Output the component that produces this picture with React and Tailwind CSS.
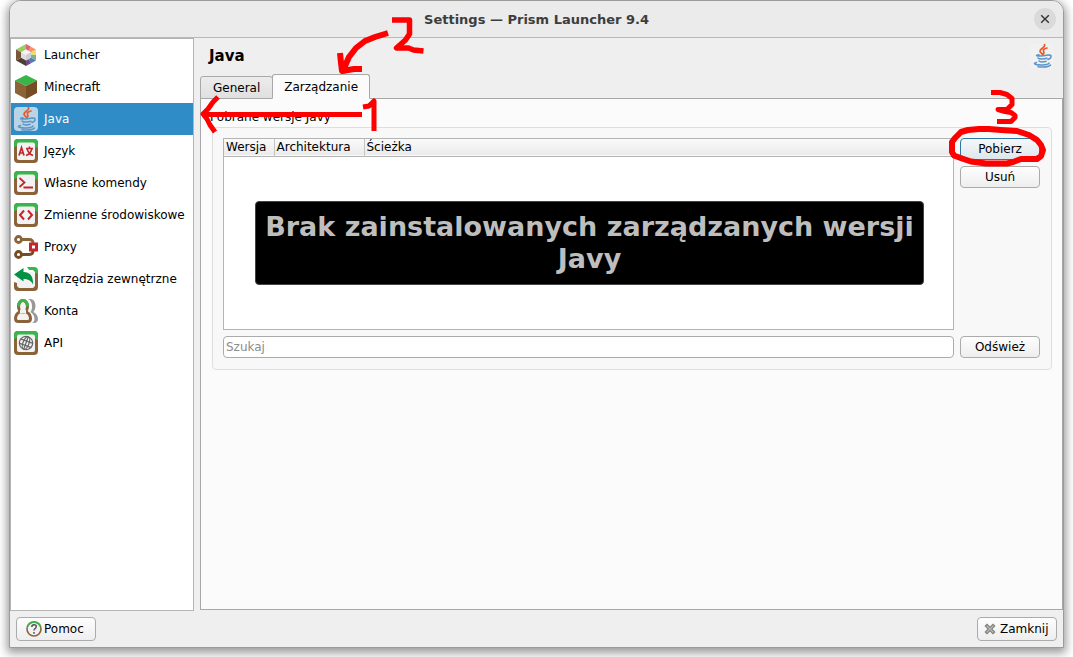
import React, { useState } from "react";

const PAGES = [
  { id: "launcher", label: "Launcher", Icon: LauncherIcon },
  { id: "minecraft", label: "Minecraft", Icon: MinecraftIcon },
  { id: "java", label: "Java", Icon: JavaIcon },
  { id: "language", label: "Język", Icon: LanguageIcon },
  { id: "commands", label: "Własne komendy", Icon: CommandsIcon },
  { id: "env", label: "Zmienne środowiskowe", Icon: EnvIcon },
  { id: "proxy", label: "Proxy", Icon: ProxyIcon },
  { id: "tools", label: "Narzędzia zewnętrzne", Icon: ToolsIcon },
  { id: "accounts", label: "Konta", Icon: AccountsIcon },
  { id: "api", label: "API", Icon: ApiIcon },
];

export default function App() {
  const [page, setPage] = useState("java");
  const [tab, setTab] = useState("manage");
  const [search, setSearch] = useState("");

  return (
    <div className="relative h-screen min-h-[480px] overflow-hidden bg-white px-[9px] pb-[9px] font-['DejaVu_Sans',sans-serif] text-[12px] leading-4 text-black">
      <div className="flex h-full flex-col overflow-hidden rounded-t-xl border border-[#9b9b9b] bg-[#efefef] shadow-[0_3px_10px_2px_rgba(0,0,0,0.4)]">
        {/* TITLE BAR */}
        <header className="flex h-[37px] shrink-0 items-center border-b border-[#b8b8b8] bg-[#ebebeb] px-[7px]">
          <span className="w-[22px]" />
          <h1 className="flex-1 pt-[2px] text-center text-[13px] font-bold text-[#3d3d3d]">
            Settings — Prism Launcher 9.4
          </h1>
          <button
            aria-label="Close"
            className="flex size-[22px] items-center justify-center rounded-full bg-[#dadada]"
          >
            <svg viewBox="0 0 10 10" className="size-[10px]">
              <path d="M1.2 1.2l7.6 7.6M8.8 1.2l-7.6 7.6" stroke="#333" strokeWidth="1.4" />
            </svg>
          </button>
        </header>

        <div className="flex min-h-0 flex-1">
          {/* SIDEBAR */}
          <nav className="w-[184px] shrink-0 border border-[#b4b4b4] bg-white">
            {PAGES.map(({ id, label, Icon }) => (
              <button
                key={id}
                onClick={() => setPage(id)}
                aria-current={page === id ? "page" : undefined}
                className={`flex h-8 w-full items-center gap-[6px] whitespace-nowrap pl-[3px] text-left ${
                  page === id ? "bg-[#308cc6] text-white" : ""
                }`}
              >
                <Icon />
                {label}
              </button>
            ))}
          </nav>

          <main className="ml-[6px] flex min-w-0 flex-1 flex-col">
            <div className="flex h-9 shrink-0 items-center justify-between px-[9px]">
              <h2 className="text-[15px] font-bold">Java</h2>
              <JavaIcon />
            </div>

            {/* TABS */}
            <div role="tablist" className="relative z-10 -mb-px flex h-[25px] shrink-0 items-end">
              <Tab active={tab === "general"} onClick={() => setTab("general")}>
                General
              </Tab>
              <Tab active={tab === "manage"} onClick={() => setTab("manage")}>
                Zarządzanie
              </Tab>
            </div>

            <div
              role="tabpanel"
              className="mb-px min-h-0 flex-1 border border-[#a8a8a8] bg-[#fbfbfb] pl-[11px] pr-[10px] pt-[10px]"
            >
              <h3 id="versions-title" className="-ml-[2px] mb-[2px]">
                Pobrane wersje Javy
              </h3>
              <div
                role="group"
                aria-labelledby="versions-title"
                className="flex flex-col gap-[6px] rounded-sm border border-[#dedede] bg-[#f8f8f8] pb-[11px] pl-[10px] pr-[11px] pt-[10px]"
              >
                <div className="flex gap-[6px]">
                  <VersionList />
                  <div className="flex w-20 shrink-0 flex-col gap-[6px]">
                    <Button focused>Pobierz</Button>
                    <Button>Usuń</Button>
                  </div>
                </div>
                <div className="flex gap-[6px]">
                  <input
                    type="text"
                    aria-label="Szukaj"
                    placeholder="Szukaj"
                    value={search}
                    onChange={(e) => setSearch(e.target.value)}
                    className="h-[22px] min-w-0 flex-1 rounded-sm border border-[#ababab] bg-white px-[2px] outline-none placeholder:text-[#8c8c8c]"
                  />
                  <div className="flex w-20 shrink-0 flex-col">
                    <Button>Odśwież</Button>
                  </div>
                </div>
              </div>
            </div>
          </main>
        </div>

        {/* FOOTER */}
        <footer className="flex h-9 shrink-0 items-center justify-between px-[6px]">
          <button className="flex h-6 w-20 items-center gap-[2px] rounded-sm border border-[#ababab] bg-linear-to-b from-[#fdfdfd] to-[#eeeeee] pl-[9px]">
            <HelpIcon />
            Pomoc
          </button>
          <button className="flex h-6 w-20 items-center gap-1 rounded-sm border border-[#ababab] bg-linear-to-b from-[#fdfdfd] to-[#eeeeee] pl-[6px]">
            <CloseIcon />
            Zamknij
          </button>
        </footer>
      </div>

      <StepMarks />
    </div>
  );
}

/* ---------------- CONTROLS ---------------- */

function Tab({ active, onClick, children }) {
  return (
    <button
      role="tab"
      aria-selected={active}
      onClick={onClick}
      className={`rounded-t-[3px] border border-[#a8a8a8] ${
        active
          ? "-ml-px h-[25px] border-b-[#fbfbfb] bg-[#fbfbfb] px-[11px]"
          : "h-[23px] bg-linear-to-b from-[#ececec] to-[#e0e0e0] px-3"
      }`}
    >
      {children}
    </button>
  );
}

function Button({ focused, children }) {
  return (
    <button
      className={`h-[22px] rounded-sm border bg-linear-to-b ${
        focused
          ? "border-[#2f77a3] from-[#f6f8fa] to-[#dde6ec]"
          : "border-[#ababab] from-[#fdfdfd] to-[#eeeeee]"
      }`}
    >
      {children}
    </button>
  );
}

function VersionList() {
  return (
    <div className="flex h-48 min-w-0 flex-1 flex-col border border-[#b4b4b4] bg-white">
      <table className="w-full table-fixed border-collapse text-left">
        <thead>
          <tr className="h-[17px] border-b border-[#b4b4b4] bg-linear-to-b from-[#fafafa] to-[#ebebeb]">
            <th className="w-[50px] border-r border-[#c4c4c4] p-0 pl-[2px] font-normal">
              Wersja
            </th>
            <th className="w-[90px] border-r border-[#c4c4c4] p-0 pl-[2px] font-normal">
              Architektura
            </th>
            <th className="p-0 pl-[2px] font-normal">Ścieżka</th>
          </tr>
        </thead>
      </table>
      <div className="flex flex-1 items-center pl-[31px] pr-[29px]">
        <p className="w-full rounded-[4px] border border-[#444] bg-black px-2 py-[9px] text-center text-[27px] font-bold leading-8 text-[#bebebe]">
          Brak zainstalowanych zarządzanych wersji Javy
        </p>
      </div>
    </div>
  );
}

/* ---------------- HAND-DRAWN STEPS ---------------- */

function StepMarks() {
  return (
    <>
      <svg
        viewBox="195 10 235 125"
        className="pointer-events-none absolute left-[195px] top-[10px] z-20 h-[125px] w-[235px]"
        fill="none"
        stroke="#ff0000"
        strokeWidth="5"
        strokeLinejoin="round"
      >
        <path d="M362 114.500H203M218 97l-5 5-5 7-5 5 4 5 3 6 5 7" />
        <path d="M363 107l6-1 5-5v30" />
        <path
          d="M388 33l-13 4-10 4-9 7-7 9-4 9-2 7M340 53l1 10 1 8 6-1 6-1h8"
          strokeWidth="6"
        />
        <path d="M392 20h17.500v14l-4 6-9 8h12l5 2 10 1" strokeWidth="5.5" />
      </svg>
      <svg
        viewBox="943 85 110 85"
        className="pointer-events-none absolute right-5 top-[85px] z-20 h-[85px] w-[110px]"
        fill="none"
        stroke="#ff0000"
        strokeWidth="5"
        strokeLinejoin="round"
      >
        <path d="M991 92.500h9l7 2 5 4v6l-5 5h-9l7 2 6 1 4 3v2l-4 4h-14" />
        <path
          d="M952 152v-10l3-4 6-6 7-2 11-1h10l12 1 16 1 12 4 8 5 4 5 2 5-2 6-4 3h-16l-8 3-6 1.500h-21l-15-2-9-3-8-3z"
          strokeWidth="6"
        />
      </svg>
    </>
  );
}

/* ---------------- ICONS ---------------- */

function Svg({ children }) {
  return (
    <svg viewBox="0 0 24 24" className="size-6 shrink-0" fill="none" aria-hidden="true">
      {children}
    </svg>
  );
}

// grass block frame shared by several pages
function BlockFrame({ children }) {
  return (
    <Svg>
      <rect width="24" height="24" rx="4" fill="#8c6239" />
      <path d="M0 8V4a4 4 0 0 1 4-4h16a4 4 0 0 1 4 4v5l-3-1V5H3v2z" fill="#39b54a" />
      <rect x="3" y="3.5" width="18" height="17.5" rx="2" fill="#f2f2f2" />
      {children}
    </Svg>
  );
}

function LauncherIcon() {
  return (
    <Svg>
      <path d="M12 12V1L2 6.5z" fill="#99cd61" />
      <path d="M12 12V1l5 2.8z" fill="#df6277" />
      <path d="M12 12l5-8.2 5 2.7z" fill="#fb9168" />
      <path d="M12 12l10-5.5V12z" fill="#f3db6c" />
      <path d="M12 12h10v5.5z" fill="#7ab392" />
      <path d="M12 12l10 5.5-5 2.7z" fill="#4b7cbc" />
      <path d="M12 12l5 8.2-5 2.8z" fill="#6f488c" />
      <path d="M12 12v11L2 17.5z" fill="#4d3f33" />
      <path d="M12 12L2 17.5v-11z" fill="#7a573b" />
      <path d="M12 6.5l5 2.7v5.6l-5 2.7-5-2.7V9.2z" fill="#dfdfdf" />
      <path d="M12 6.5l5 2.7-5 2.8-5-2.8z" fill="#f4f4f4" />
      <path d="M12 12l5-2.8v5.6l-5 2.7z" fill="#cfcfcf" />
    </Svg>
  );
}

function MinecraftIcon() {
  return (
    <Svg>
      <path d="M12 0l11 5.5L12 11 1 5.5z" fill="#39b54a" />
      <path d="M1 5.5L12 11v13L1 18z" fill="#8c6239" />
      <path d="M23 5.5L12 11v13l11-6z" fill="#754c24" />
    </Svg>
  );
}

function JavaIcon() {
  return (
    <Svg>
      <rect width="24" height="24" rx="4" fill="#f2f2f2" fillOpacity="0.7" />
      <path
        d="M14.5 0.5c1.5 3-4.5 4-4.5 6.500 0 1.700 1.500 2 2.500 3.500M17 4c-3 .8-4 1.800-3.500 3.200.5 1 .8 2-.5 3.300"
        stroke="#ec5a29"
        strokeWidth="1.7"
        strokeLinecap="round"
      />
      <g stroke="#5b94c9" strokeWidth="1.5" strokeLinecap="round">
        <path d="M9 10.8c-7 1.200 2 2 9 .2" />
        <path d="M8 14c1 1.300 6 1.200 9 .2M9 17c1 1.200 4.500 1.200 7 .2" />
        <path d="M18.500 11.200c3.500-1 3.500 3-.5 4.300" />
        <path d="M6.500 18.500c-6 1.500 2 3 8.500 2.200 2-.2 4-.7 4-1.700M8 22.700c5 .6 11 0 12.500-1.700" />
      </g>
    </Svg>
  );
}

function LanguageIcon() {
  return (
    <BlockFrame>
      <path d="M5 16.5L7.500 8.500 10 16.500M6 14h3.500" stroke="#c1272d" strokeWidth="1.7" />
      <path d="M12 9.500h7M15.500 7.500v2M18 9.500c-1 4-3 6-6 7M13 9.500c1 4 3 6 6 7" stroke="#c1272d" strokeWidth="1.6" />
    </BlockFrame>
  );
}

function CommandsIcon() {
  return (
    <BlockFrame>
      <path d="M5.500 7l5 4.500-5 4.500M9.500 16.500H19" stroke="#c1272d" strokeWidth="1.8" />
    </BlockFrame>
  );
}

function EnvIcon() {
  return (
    <BlockFrame>
      <path d="M10 7.500L6 12l4 4.500M14 7.500l4 4.500-4 4.500" stroke="#c1272d" strokeWidth="2" />
    </BlockFrame>
  );
}

function ProxyIcon() {
  return (
    <Svg>
      <path d="M8 4.500h7c3 0 4 1 4 4" stroke="#8c6239" strokeWidth="3" />
      <path d="M8 19.500h7c3 0 4-1 4-4" stroke="#754c24" strokeWidth="3" />
      <circle cx="4.5" cy="4.5" r="3" stroke="#8c6239" strokeWidth="2.8" />
      <circle cx="4.5" cy="19.5" r="3" stroke="#754c24" strokeWidth="2.8" />
      <rect x="16.5" y="9" width="6" height="6" fill="#fff" stroke="#c1272d" strokeWidth="3" />
    </Svg>
  );
}

function ToolsIcon() {
  return (
    <Svg>
      <path d="M3 5h16l2 2v14H3z" fill="#f2f2f2" />
      <path d="M13 0h7a4 4 0 0 1 4 4v4l-3-1V5l-2-2h-4z" fill="#39b54a" />
      <path d="M24 7v13a4 4 0 0 1-4 4H4a4 4 0 0 1-4-4v-5l3 1v3l2 2h14l2-2V6z" fill="#8c6239" />
      <path d="M0 7.500L9.500 1v4c7 0 10 5 9.500 12.500-2-4-5-5.500-9.500-5.500v2.500z" fill="#009245" />
    </Svg>
  );
}

function AccountsIcon() {
  return (
    <Svg>
      <path
        d="M14 0h2.500c3 0 5 3 5 7 0 2.500-1 4.500-2 6 2.500 1.500 4.500 3.500 4.500 7 0 2.500-1.500 4-4 4h-2c2-1 2.500-2.500 2.500-4 0-3.500-2-5.500-4-7 1-1.500 1.500-3.500 1.500-6 0-3-1.500-6-4-7z"
        fill="#999"
      />
      <path
        d="M5.500 13C3 14.500 1.500 16.500 1.500 19.500c0 2 1 3 3 3h9c2 0 3-1 3-3 0-3-1.500-5-4-6.500"
        fill="#f2f2f2"
        stroke="#8c6239"
        strokeWidth="3"
      />
      <ellipse cx="9" cy="7.5" rx="4.500" ry="6" fill="#f2f2f2" stroke="#8c6239" strokeWidth="3" />
      <path d="M4.500 7.500C4.500 4 6.500 1.500 9 1.500s4.500 2.500 4.500 6" stroke="#39b54a" strokeWidth="3" />
      <path d="M6 10.500h6v4H6z" fill="#f2f2f2" />
    </Svg>
  );
}

function ApiIcon() {
  return (
    <BlockFrame>
      <g stroke="#666" strokeWidth="1.2" transform="rotate(20 12 12)">
        <circle cx="12" cy="12" r="6.7" />
        <ellipse cx="12" cy="12" rx="3" ry="6.7" />
        <path d="M5.500 10h13M5.500 14.500h13M12 5.300v13.400" />
      </g>
    </BlockFrame>
  );
}

function HelpIcon() {
  return (
    <svg viewBox="0 0 16 16" className="size-4 shrink-0" fill="none" aria-hidden="true">
      <circle cx="8" cy="8" r="7" fill="#f2f2f2" stroke="#8c6239" strokeWidth="1.6" />
      <path d="M1.500 5.500a7 7 0 0 1 13 0" stroke="#39b54a" strokeWidth="1.8" />
      <path d="M5.800 6c0-3 4.500-3 4.500-.5C10.300 7.500 8 7.500 8 9.500M8 11v1.700" stroke="#555" strokeWidth="1.5" />
    </svg>
  );
}

function CloseIcon() {
  return (
    <svg viewBox="0 0 12 12" className="size-3 shrink-0" aria-hidden="true">
      <path d="M3 3l6 6M9 3L3 9" stroke="#777b75" strokeWidth="3.5" strokeLinecap="square" />
      <path d="M2.500 2.500l7 7M9.500 2.500l-7 7" stroke="#b5b8b2" strokeWidth="1.5" />
    </svg>
  );
}
